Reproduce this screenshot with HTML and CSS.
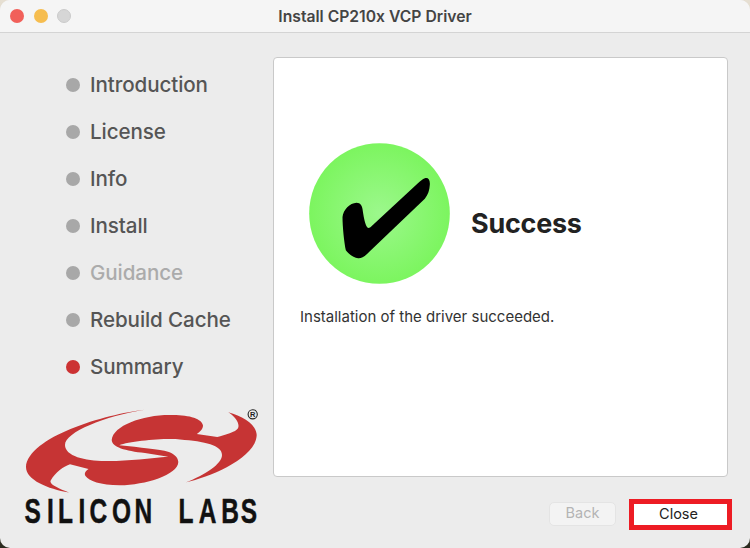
FILE: index.html
```html
<!DOCTYPE html>
<html lang="en">
<head>
<meta charset="utf-8">
<title>Install CP210x VCP Driver</title>
<link rel="stylesheet" href="styles.css">
</head>
<body>
<div class="window">
  <header class="titlebar">
    <div class="lights">
      <span class="light light-red"></span>
      <span class="light light-yellow"></span>
      <span class="light light-gray"></span>
    </div>
    <h1 class="title">Install CP210x VCP Driver</h1>
  </header>
  <div class="main">
    <aside class="sidebar">
      <ul class="steps">
        <li class="step"><span class="dot"></span>Introduction</li>
        <li class="step"><span class="dot"></span>License</li>
        <li class="step"><span class="dot"></span>Info</li>
        <li class="step"><span class="dot"></span>Install</li>
        <li class="step step-muted"><span class="dot"></span>Guidance</li>
        <li class="step"><span class="dot"></span>Rebuild Cache</li>
        <li class="step"><span class="dot dot-active"></span>Summary</li>
      </ul>
      <svg class="logo" viewBox="20 405 245 125" width="245" height="125" aria-label="Silicon Labs">
        <path class="logo-mark" d="M145 409.7C105 414 28 437 26 467C26 480 48 489 69 492.5C58 488 48 484 51 480C55 473 64 466 70 464.3L88.5 469C85 471 84 474 85.5 476C89 481 100 485 120 485.3C145 485 178 475 178.3 462C178 456 172 453 168 451.7C160 449.5 140 447.5 119.3 445.3C130 441 165 438 180 439.5C205 441.5 222 445 222 455C222 464 205 475 186 482.3C210 477 256 458 256.7 435C256.5 425 243 416 228.3 412.3C236 417 240 424 238 428.3C236 432 225 435 217.3 437L196.7 434C200 432 203 429 203 425.5C202 419 190 415 173 415C145 414 113 425 111.7 440C112 447 125 451 145 453L168.3 456.7C150 458 125 461.5 105 461C85 461 65 456 65 445C65 432 105 416 145 409.7Z"/>
        <circle class="logo-reg-ring" cx="252.7" cy="414.3" r="4.6"/>
        <text class="logo-reg" x="252.7" y="417">R</text>
        <text class="logo-word" transform="scale(.7 1)" y="523" x="35 67 83 112 128 160 192 240 255 284 316 344">SILICON LABS</text>
      </svg>
    </aside>
    <section class="content">
      <div class="panel">
        <div class="result">
          <svg class="badge" viewBox="58 40 422 423" width="141" height="141" aria-hidden="true">
            <defs>
              <radialGradient id="badge-fill">
                <stop offset="0" stop-color="#9cf88c"/>
                <stop offset="1" stop-color="#7cf55f"/>
              </radialGradient>
            </defs>
            <circle cx="269" cy="251.5" r="211" fill="url(#badge-fill)"/>
            <path d="M405 146C415 143 421 150 420 165C419 180 415 195 405 207L240 365C225 380 215 387 205 386C190 383 175 372 168 362C163 340 158 290 158 262C160 240 180 220 200 219C212 219 218 228 219 245C222 265 226 285 232 293C236 297 240 295 245 290L385 160C392 154 398 149 405 146Z"/>
          </svg>
          <h2 class="result-title">Success</h2>
        </div>
        <p class="message">Installation of the driver succeeded.</p>
      </div>
      <div class="actions">
        <button class="btn btn-disabled" type="button">Back</button>
        <button class="btn btn-close" type="button">Close</button>
      </div>
    </section>
  </div>
</div>
</body>
</html>
```

FILE: styles.css
```css
* { box-sizing: border-box; }

html, body { margin: 0; height: 100%; }

body {
  background: linear-gradient(180deg, #e6dfd2 0%, #b9b29e 60%, #2a2a1e 100%);
  font-family: Inter, "Liberation Sans", sans-serif;
  overflow: hidden;
}

.window {
  width: 750px;
  height: 548px;
  background: #ececec;
  border-radius: 10px;
  overflow: hidden;
  display: flex;
  flex-direction: column;
}

.titlebar {
  height: 33px;
  flex: none;
  display: flex;
  align-items: center;
  justify-content: center;
  position: relative;
  background: #f5f5f5;
  border-bottom: 1px solid #d4d4d4;
}

.lights {
  position: absolute;
  left: 10px;
  top: 9px;
  display: flex;
  gap: 9.5px;
}

.light {
  width: 14px;
  height: 14px;
  border-radius: 50%;
}

.light-red { background: #f1605a; }
.light-yellow { background: #f6bd4f; }
.light-gray { background: #d6d6d6; border: 1px solid #cacaca; }

.title {
  margin: 0;
  font-size: 15.7px;
  font-weight: 600;
  color: #444;
}

.main {
  flex: 1;
  display: flex;
}

.sidebar {
  width: 273px;
  flex: none;
  display: flex;
  flex-direction: column;
  align-items: flex-start;
  padding-left: 20px;
}

.steps {
  list-style: none;
  margin: 0;
  padding: 28px 0 0 46px;
}

.step {
  height: 47px;
  display: flex;
  align-items: center;
  gap: 10px;
  font-size: 20.6px;
  font-weight: 500;
  letter-spacing: -0.1px;
  color: #555;
  white-space: nowrap;
}

.step-muted { color: #ababab; }

.dot {
  width: 14px;
  height: 14px;
  border-radius: 50%;
  background: #a8a8a8;
}

.dot-active { background: #cc3233; }

.logo {
  margin-top: 15px;
  display: block;
}

.logo-mark { fill: #c63434; }

.logo-reg-ring {
  fill: none;
  stroke: #222;
  stroke-width: 1.1;
}

.logo-reg {
  font: 700 7.5px "Liberation Sans", sans-serif;
  fill: #222;
  text-anchor: middle;
}

.logo-word {
  font: 700 35px "Liberation Sans", sans-serif;
  fill: #111;
  stroke: #111;
  stroke-width: 0.5;
}

.content {
  flex: 1;
  display: flex;
  flex-direction: column;
  padding: 24px 18px 0 0;
}

.panel {
  width: 455px;
  height: 420px;
  background: #fff;
  border: 1px solid #c9c9c9;
  border-radius: 4px;
  padding: 85px 0 0 26px;
}

.result {
  display: flex;
  align-items: center;
  gap: 21px;
  padding-left: 9px;
}

.badge { display: block; flex: none; }

.result-title {
  margin: 19px 0 0;
  font-size: 26.9px;
  font-weight: 700;
  letter-spacing: -0.2px;
  color: #222;
}

.message {
  margin: 23px 0 0;
  font-size: 15px;
  color: #333;
}

.actions {
  display: flex;
  justify-content: flex-end;
  align-items: flex-start;
  gap: 13px;
  margin-top: 22px;
}

.btn {
  font-family: Inter, "Liberation Sans", sans-serif;
  font-size: 14.5px;
  padding: 0;
}

.btn-disabled {
  width: 67px;
  height: 24px;
  margin-top: 2.5px;
  background: #f3f3f3;
  border: 1px solid #e4e4e4;
  border-radius: 5px;
  padding-bottom: 2px;
  color: #b4b4b4;
}

.btn-close {
  width: 103px;
  height: 31px;
  background: #fff;
  border: 5px solid #ed1c24;
  padding: 0 4px 2px 0;
  color: #222;
}
```
